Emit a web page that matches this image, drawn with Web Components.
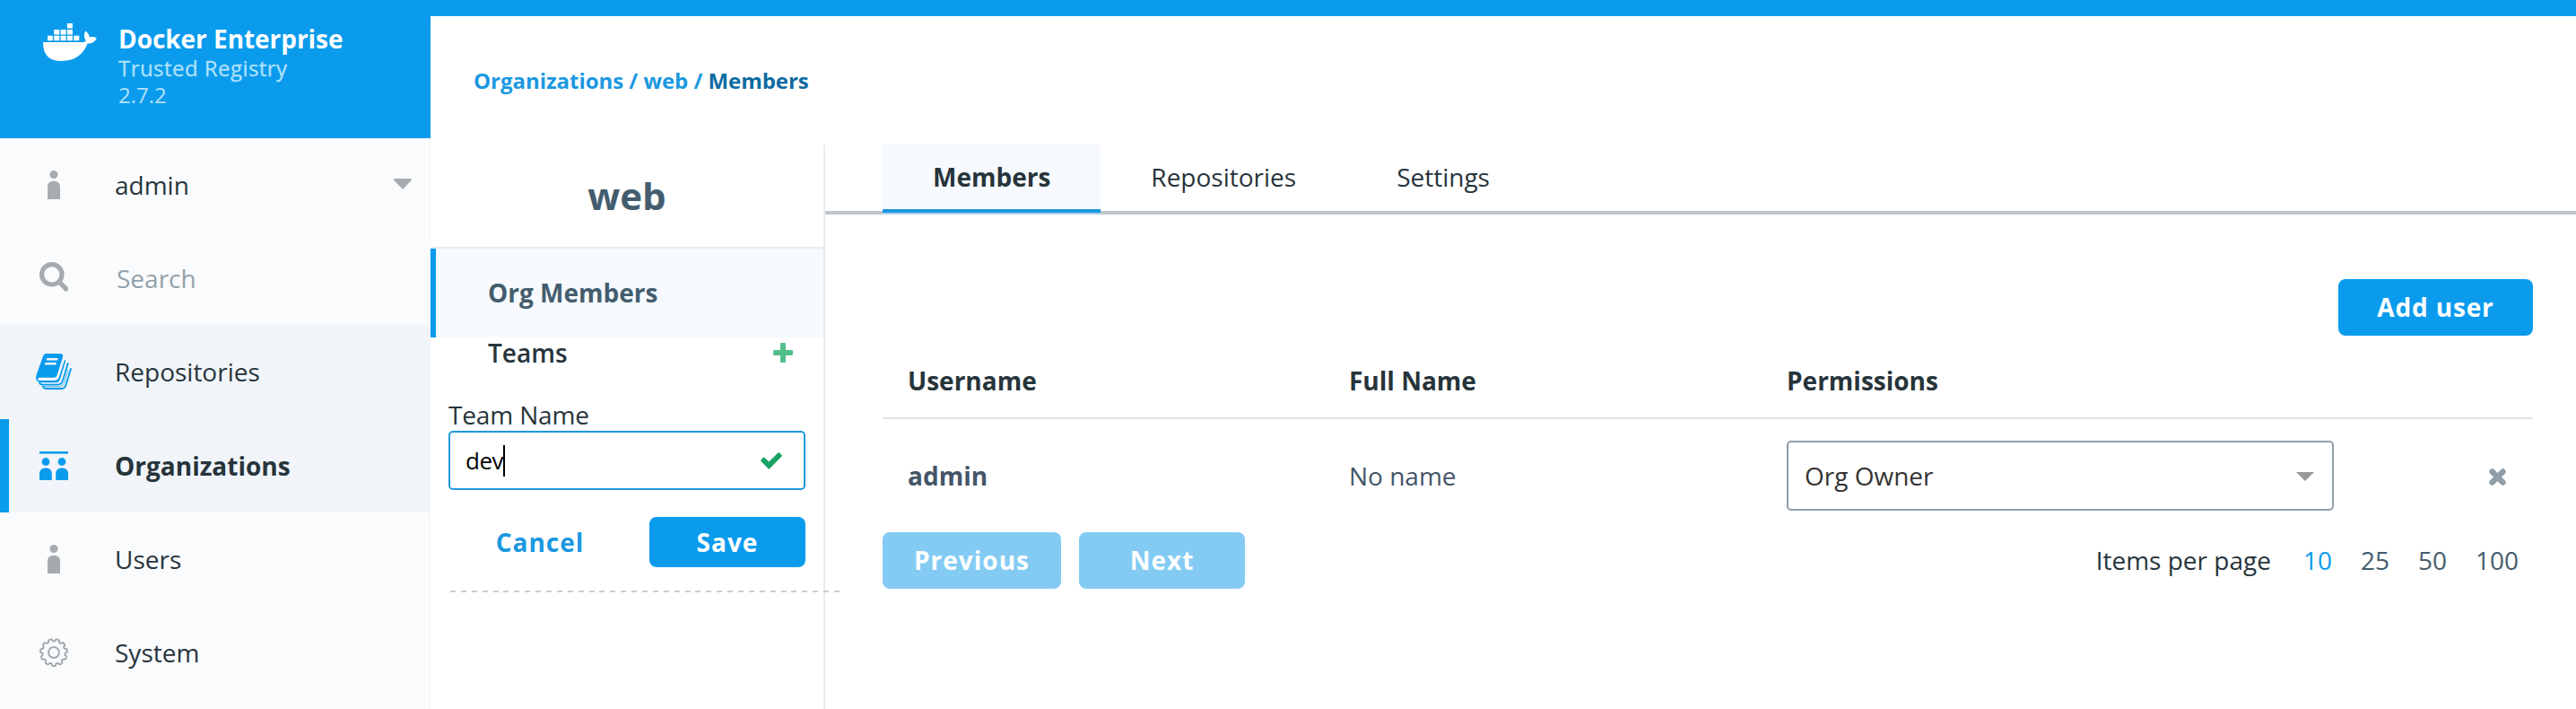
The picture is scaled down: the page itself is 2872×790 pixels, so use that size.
<!DOCTYPE html>
<html lang="en">
<head>
<meta charset="utf-8">
<title>Docker Trusted Registry</title>
<style>
  html, body { margin: 0; height: 100%; background: #fff; overflow: hidden; }
  body { font: 28px/36px "Open Sans", "Noto Sans", sans-serif; color: #27343b; }
</style>
</head>
<body>
<dtr-app></dtr-app>
<script>
const define = (name, css, html) => customElements.define(name, class extends HTMLElement {
  constructor() {
    super();
    const t = document.createElement('template');
    t.innerHTML = `<style>${css}</style>${html}`;
    this.attachShadow({ mode: 'open' }).append(t.content.cloneNode(true));
  }
});

const ICONS = {
  whale: [60, 42, '<path fill="#fff" d="M0 21H43.500C45.800 21 47.300 20.400 47.900 19.500C45.500 16 45.300 11.500 47.300 8.500C50 10.300 51.600 12.800 51.600 15.400C54.500 14.600 57.600 15.200 59.700 16.500C58 20.500 54.500 22.500 49.700 22.600C44.500 35.500 35 42 20.500 42C7 42 0 35.500 0 21ZM5 13.700h5.800v5.600h-5.800zM12.200 13.700h6v5.600h-6zM19.600 13.700h6v5.600h-6zM26.900 13.700h6v5.600h-6zM34.300 13.700h6v5.600h-6zM12.200 7h6v5.400h-6zM19.600 7h6v5.400h-6zM26.900 7h6v5.400h-6zM26.900 0h6v5.600h-6z"/>'],
  user: [14, 32, '<g fill="#a6abae"><circle cx="7" cy="4.500" r="4.500"/><path d="M0 32V18.500C0 14 3 11.800 7 11.800S14 14 14 18.500V32Z"/></g>'],
  search: [32, 33, '<g fill="none" stroke="#a6abae"><circle cx="13.800" cy="13.800" r="11.200" stroke-width="5.200"/><path d="M22 22.200L29.600 29.800" stroke-width="5.400" stroke-linecap="round"/></g>'],
  books: [40, 40, '<g fill="#0a9bed"><path fill-rule="evenodd" d="M11.500 0H27.500Q31 0.500 30 4L23.500 24.500Q22.700 26.700 20 26.700H4.500Q2 27 2 28.500Q2.200 30 4 30H21.500Q24.500 29.800 25.500 27L32.200 6.500Q33.500 7.500 33 9L27 28.500Q26 32 22.500 32.200H5Q0 31.500 0 26.500L.8 23L8 3Q9 0 11.500 0ZM12.200 5L11.500 7.500H24L24.800 5ZM10.500 10L9.700 12.600H22.200L23 10Z"/></g><g fill="none" stroke="#0a9bed" stroke-width="1.900" stroke-linecap="round" stroke-linejoin="round"><path d="M35.700 11L30 30Q28.700 34.400 25 34.600H7.500Q5 34.600 4 33"/><path d="M39 17L33.800 34Q32.400 38.800 29 39H11Q8.500 38.700 7.700 36.500"/></g><path d="M36 18L32 31.500Q30.500 36.300 27 36.700H9" fill="none" stroke="#0a9bed" stroke-width=".7"/>'],
  orgs: [32, 32, '<g fill="#0a9bed"><path d="M0 0h32v2.600H0z"/><circle cx="7" cy="11.500" r="4.400"/><circle cx="25" cy="11.500" r="4.400"/><path d="M0 32V25C0 20.500 3 18.500 6.900 18.500S13.800 20.500 13.800 25V32ZM18.200 32V25C18.200 20.500 21.200 18.500 25.100 18.500S32 20.500 32 25V32Z"/></g>'],
  gear: [32, 32, ''],
  caret: [20, 12, '<path fill="#a6abae" d="M1.500 0H18.500Q20.500 .3 19.500 2L11 11Q10 12 9 11L.5 2Q-.5 .3 1.500 0Z"/>'],
  arrow: [20, 10, '<path fill="#999" d="M0 0H20L10 10Z"/>'],
  plus: [22, 22, '<path fill="#52bf8a" d="M9.300 0h3.400q1.300 0 1.300 1.300V8h6.700q1.300 0 1.300 1.300v3.400q0 1.300-1.300 1.300H14v6.700q0 1.300-1.300 1.300H9.300Q8 22 8 20.700V14H1.300Q0 14 0 12.700V9.300Q0 8 1.300 8H8V1.300Q8 0 9.300 0Z"/>'],
  check: [24, 19, '<path fill="#1aa366" d="M.5 8.300L3 5.800Q3.700 5.300 4.400 5.800L9.300 10.600L19.400 .5Q20.200 0 20.900 .5L23.500 3.100Q24.100 3.900 23.500 4.600L10 18.200Q9.200 18.800 8.500 18.200L.5 10Q0 9 .5 8.300Z"/>'],
  close: [19, 19, '<path fill="none" stroke="#8f9ea8" stroke-width="6.400" stroke-linecap="round" d="M3.500 3.500L15.500 15.500M15.500 3.500L3.500 15.500"/>'],
};
{
  // eleven-toothed gear outline with a notch at twelve o'clock
  const pts = [], teeth = 11;
  for (let i = 0; i <= 264; i++) {
    const a = i / 264 * Math.PI * 2;
    const r = 13.700 + 1.300 * Math.tanh(-2.2 * Math.cos(teeth * a) + .5);
    pts.push((16 + r * Math.sin(a)).toFixed(2) + ' ' + (16 - r * Math.cos(a)).toFixed(2));
  }
  ICONS.gear[2] = `<g fill="none" stroke="#a6abae" stroke-width="2"><path stroke-linejoin="round" d="M${pts.join('L')}Z"/><circle cx="16" cy="16" r="5.900"/></g>`;
}
customElements.define('dtr-icon', class extends HTMLElement {
  connectedCallback() {
    const [w, h, body] = ICONS[this.getAttribute('name')];
    this.attachShadow({ mode: 'open' }).innerHTML =
      `<style>:host{display:block;flex:none;width:${w}px;height:${h}px}svg{display:block}</style>
       <svg width="${w}" height="${h}" viewBox="0 0 ${w} ${h}">${body}</svg>`;
  }
});

define('dtr-brand', `
  :host { display: flex; box-sizing: border-box; height: 154px; padding: 26px 0 0 48px; background: #0a9bed; color: #b0e1fb; }
  div { margin: -1px 0 0 24px; font-size: 24px; line-height: 30px; }
  b { display: block; font-size: 28px; line-height: 36px; letter-spacing: -.05px; color: #fff; }
  span { display: block; }
  .product { letter-spacing: .45px; -webkit-text-stroke: .3px; }
`, `<dtr-icon name="whale"></dtr-icon><div><b>Docker Enterprise</b><span class="product">Trusted Registry</span><span>2.7.2</span></div>`);

define('nav-item', `
  :host { display: flex; align-items: center; box-sizing: border-box; height: 104.200px; border-left: 0 solid #0a9bed; padding-right: 21px; }
  :host([group]) { background: #f1f5fa; }
  :host([active]) { font-weight: 700; border-left-width: 10px; }
  .icon { width: 120px; display: flex; justify-content: center; margin-right: 8px; }
  :host([active]) .icon { width: 100px; margin-right: 18px; }
  .label { flex: 1; }
  :host([placeholder]) .label { color: #93a1aa; padding-left: 2px; }
  :host([placeholder]) .icon { margin-top: -3px; }
`, `<div class="icon"><slot name="icon"></slot></div><div class="label"><slot></slot></div><slot name="end"></slot>`);

define('side-nav', `
  :host { display: block; width: 480px; background: #fafbfd; box-shadow: inset -1px 0 #f2f4f7; }
`, `
  <dtr-brand></dtr-brand>
  <nav-item><dtr-icon slot="icon" name="user"></dtr-icon>admin<dtr-icon slot="end" name="caret" style="margin-top:-3px"></dtr-icon></nav-item>
  <nav-item placeholder><dtr-icon slot="icon" name="search"></dtr-icon>Search</nav-item>
  <nav-item group><dtr-icon slot="icon" name="books"></dtr-icon>Repositories</nav-item>
  <nav-item group active><dtr-icon slot="icon" name="orgs"></dtr-icon>Organizations</nav-item>
  <nav-item><dtr-icon slot="icon" name="user"></dtr-icon>Users</nav-item>
  <nav-item><dtr-icon slot="icon" name="gear"></dtr-icon>System</nav-item>
`);

define('dtr-button', `
  :host { display: flex; align-items: center; justify-content: center; box-sizing: border-box; height: 63px; padding-bottom: 1px; border-radius: 8px;
    background: #0a9bed; color: #fff; font-weight: 700; letter-spacing: 1px; }
  :host([small]) { height: 56px; padding-bottom: 0; }
  :host([disabled]) { background: #84cbf4; }
  :host([link]) { background: none; color: #1a98e0; }
`, `<span><slot></slot></span>`);

define('bread-crumbs', `
  :host { display: flex; align-items: center; height: 143px; padding-left: 48px; font-size: 24px; font-weight: 700; letter-spacing: -.04px; color: #1a98e0; }
  .here { color: #0d6ba1; }
`, `<span><span>Organizations</span> / <span>web</span> / <span class="here">Members</span></span>`);

define('team-form', `
  :host { display: block; padding: 34px 20px 0; }
  label { display: block; letter-spacing: -.15px; }
  .input { display: flex; align-items: center; box-sizing: border-box; height: 66px; border: 2px solid #1f98dd; border-radius: 5px;
    padding: 0 24px 0 17px; font-size: 26px; letter-spacing: -.5px; color: #000; background: #fff; }
  .caret { width: 2px; height: 35px; margin: 0 auto 0 0; background: #000; }
  .actions { display: grid; grid-template-columns: 204px 174px; justify-content: end; column-gap: 20px; margin: 30px 0 26px; }
  .rule { width: 434px; height: 2px; margin-left: 2px;
    background: repeating-linear-gradient(90deg, #ccc 0 6px, transparent 6px 11.890px); }
`, `
  <label><span>Team Name</span></label>
  <div class="input"><span>dev</span><i class="caret"></i><dtr-icon name="check"></dtr-icon></div>
  <div class="actions"><dtr-button link small>Cancel</dtr-button><dtr-button small>Save</dtr-button></div>
  <div class="rule"></div>
`);

define('org-panel', `
  :host { display: block; box-sizing: border-box; width: 440px; border-right: 2px solid #e7ecf1; }
  h1 { margin: 0; height: 114px; border-bottom: 2px solid #e7ecf1; display: flex; align-items: center; justify-content: center;
    font-size: 42px; font-weight: 700; color: #445d6e; }
  .current { box-sizing: border-box; height: 99px; display: flex; align-items: center; border-left: 6px solid #0a9bed; padding: 0 0 1px 58px;
    background: #f6faff; font-weight: 700; color: #445d6e; }
  .teams { display: flex; align-items: center; justify-content: space-between; height: 34px; padding: 0 34px 0 64px; font-weight: 600; }
`, `
  <h1><span>web</span></h1>
  <div class="current"><span>Org Members</span></div>
  <div class="teams"><span>Teams</span><dtr-icon name="plus"></dtr-icon></div>
  <team-form></team-form>
`);

define('tab-item', `
  :host { display: block; box-sizing: border-box; height: 72px; padding: 0 56px; line-height: 72px; }
  :host([active]) { height: 76px; background: #f6faff; border-bottom: 4px solid #1b97de; box-shadow: 0 2px #a9d3ee; font-weight: 700; }
`, `<span><slot></slot></span>`);

define('tab-bar', `
  :host { display: flex; align-items: flex-start; box-sizing: border-box; height: 78px; padding-left: 64px; border-bottom: 4px solid #bfc7cb; }
`, `<slot></slot>`);

define('select-box', `
  :host { display: flex; align-items: center; justify-content: space-between; box-sizing: border-box; width: 610px; height: 78px;
    border: 2px solid #8f9ea8; border-radius: 5px; padding: 0 20px 0 18px; color: #333; }
  dtr-icon { margin-top: 2px; }
`, `<span><slot></slot></span><dtr-icon name="arrow"></dtr-icon>`);

define('member-table', `
  :host { display: block; }
  .row { display: grid; grid-template-columns: 492px 488px 1fr auto; align-items: center; padding: 24px 30px 24px 28px; color: #445568; }
  .head { box-sizing: border-box; height: 93px; padding: 9px 30px 0 28px; border-bottom: 2px solid #e1e1e1; font-weight: 700; color: #27343b; }
  .name { font-weight: 700; }
  dtr-icon { margin-top: 2px; }
`, `
  <div class="row head"><div><span>Username</span></div><div><span>Full Name</span></div><div><span>Permissions</span></div></div>
  <div class="row"><div class="name"><span>admin</span></div><div><span>No name</span></div><select-box>Org Owner</select-box><dtr-icon name="close"></dtr-icon></div>
`);

define('page-nav', `
  :host { display: flex; align-items: center; }
  .prev { width: 199px; margin-right: 20px; }
  .next { width: 185px; margin-right: auto; }
  .sizes { display: flex; color: #445d6e; padding: 0 16px 1px 0; }
  .sizes span { margin-left: 32px; }
  .sizes .lbl { color: #27343b; margin-right: 4px; } .sizes .on { color: #0a9bed; }
`, `
  <dtr-button class="prev" disabled>Previous</dtr-button><dtr-button class="next" disabled>Next</dtr-button>
  <div class="sizes"><span class="lbl">Items per page</span><span class="on">10</span><span>25</span><span>50</span><span>100</span></div>
`);

define('members-view', `
  :host { display: block; flex: 1; }
  .body { padding: 72px 48px 0 64px; }
  .add { width: 217px; margin-left: auto; letter-spacing: .85px; }
`, `
  <tab-bar><tab-item active>Members</tab-item><tab-item>Repositories</tab-item><tab-item>Settings</tab-item></tab-bar>
  <div class="body"><dtr-button class="add">Add user</dtr-button><member-table></member-table><page-nav></page-nav></div>
`);

define('dtr-app', `
  :host { display: grid; grid-template-columns: 480px 1fr; height: 100vh; }
  main { display: flex; flex-direction: column; border-top: 18px solid #0a9bed; }
  .cols { flex: 1; display: flex; }
  org-panel { position: relative; z-index: 1; }
`, `<side-nav></side-nav><main><bread-crumbs></bread-crumbs><div class="cols"><org-panel></org-panel><members-view></members-view></div></main>`);
</script>
</body>
</html>
